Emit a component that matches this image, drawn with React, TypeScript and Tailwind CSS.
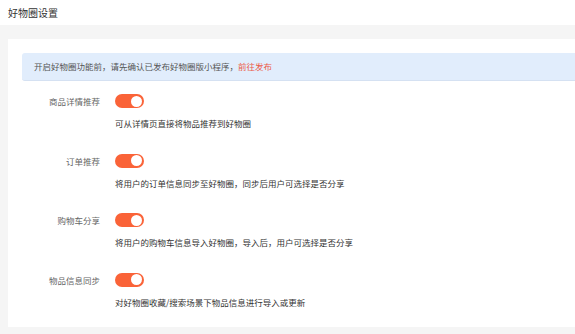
import React from 'react'

const items = [
  { label: '商品详情推荐', desc: '可从详情页直接将物品推荐到好物圈' },
  { label: '订单推荐', desc: '将用户的订单信息同步至好物圈，同步后用户可选择是否分享' },
  { label: '购物车分享', desc: '将用户的购物车信息导入好物圈，导入后，用户可选择是否分享' },
  { label: '物品信息同步', desc: '对好物圈收藏/搜索场景下物品信息进行导入或更新' },
]

const Toggle = () => (
  <div className="w-[29px] h-[14px] rounded-full bg-[#fa6338] flex items-center justify-end pr-[2px]">
    <div className="w-[11px] h-[11px] rounded-full bg-white" />
  </div>
)

const App = () => {
  return (
    <div
      className="w-[575px] h-[334px] bg-[#f5f5f5] overflow-hidden flex flex-col"
      style={{ fontFamily: '"Noto Sans CJK SC", "Noto Sans", sans-serif' }}
    >
      <div className="h-[25px] bg-white px-[8px] flex items-center text-[10px] text-[#333] shrink-0">
        好物圈设置
      </div>
      <div className="pl-[8px] pt-[14px] pb-[7px] flex-1 min-h-0">
        <div className="h-full bg-white pl-[14px] pt-[14px]">
          <div className="h-[28px] bg-[#e1edfc] rounded-l-[3px] border-b border-[#d5e1f2] flex items-center pl-[12px] text-[8.5px] text-[#555]">
            开启好物圈功能前，请先确认已发布好物圈版小程序，<span className="text-[#ec5a45]">前往发布</span>
          </div>
          <div className="flex flex-col pt-[13px]">
            {items.map((it) => (
              <div key={it.label} className="flex h-[59.5px]">
                <div className="w-[78px] text-right text-[8.5px] text-[#666] leading-[14px]">{it.label}</div>
                <div className="ml-[15px] flex flex-col">
                  <Toggle />
                  <div className="mt-[9px] text-[8.5px] text-[#333] leading-[12px]">{it.desc}</div>
                </div>
              </div>
            ))}
          </div>
        </div>
      </div>
    </div>
  )
}

export default App
